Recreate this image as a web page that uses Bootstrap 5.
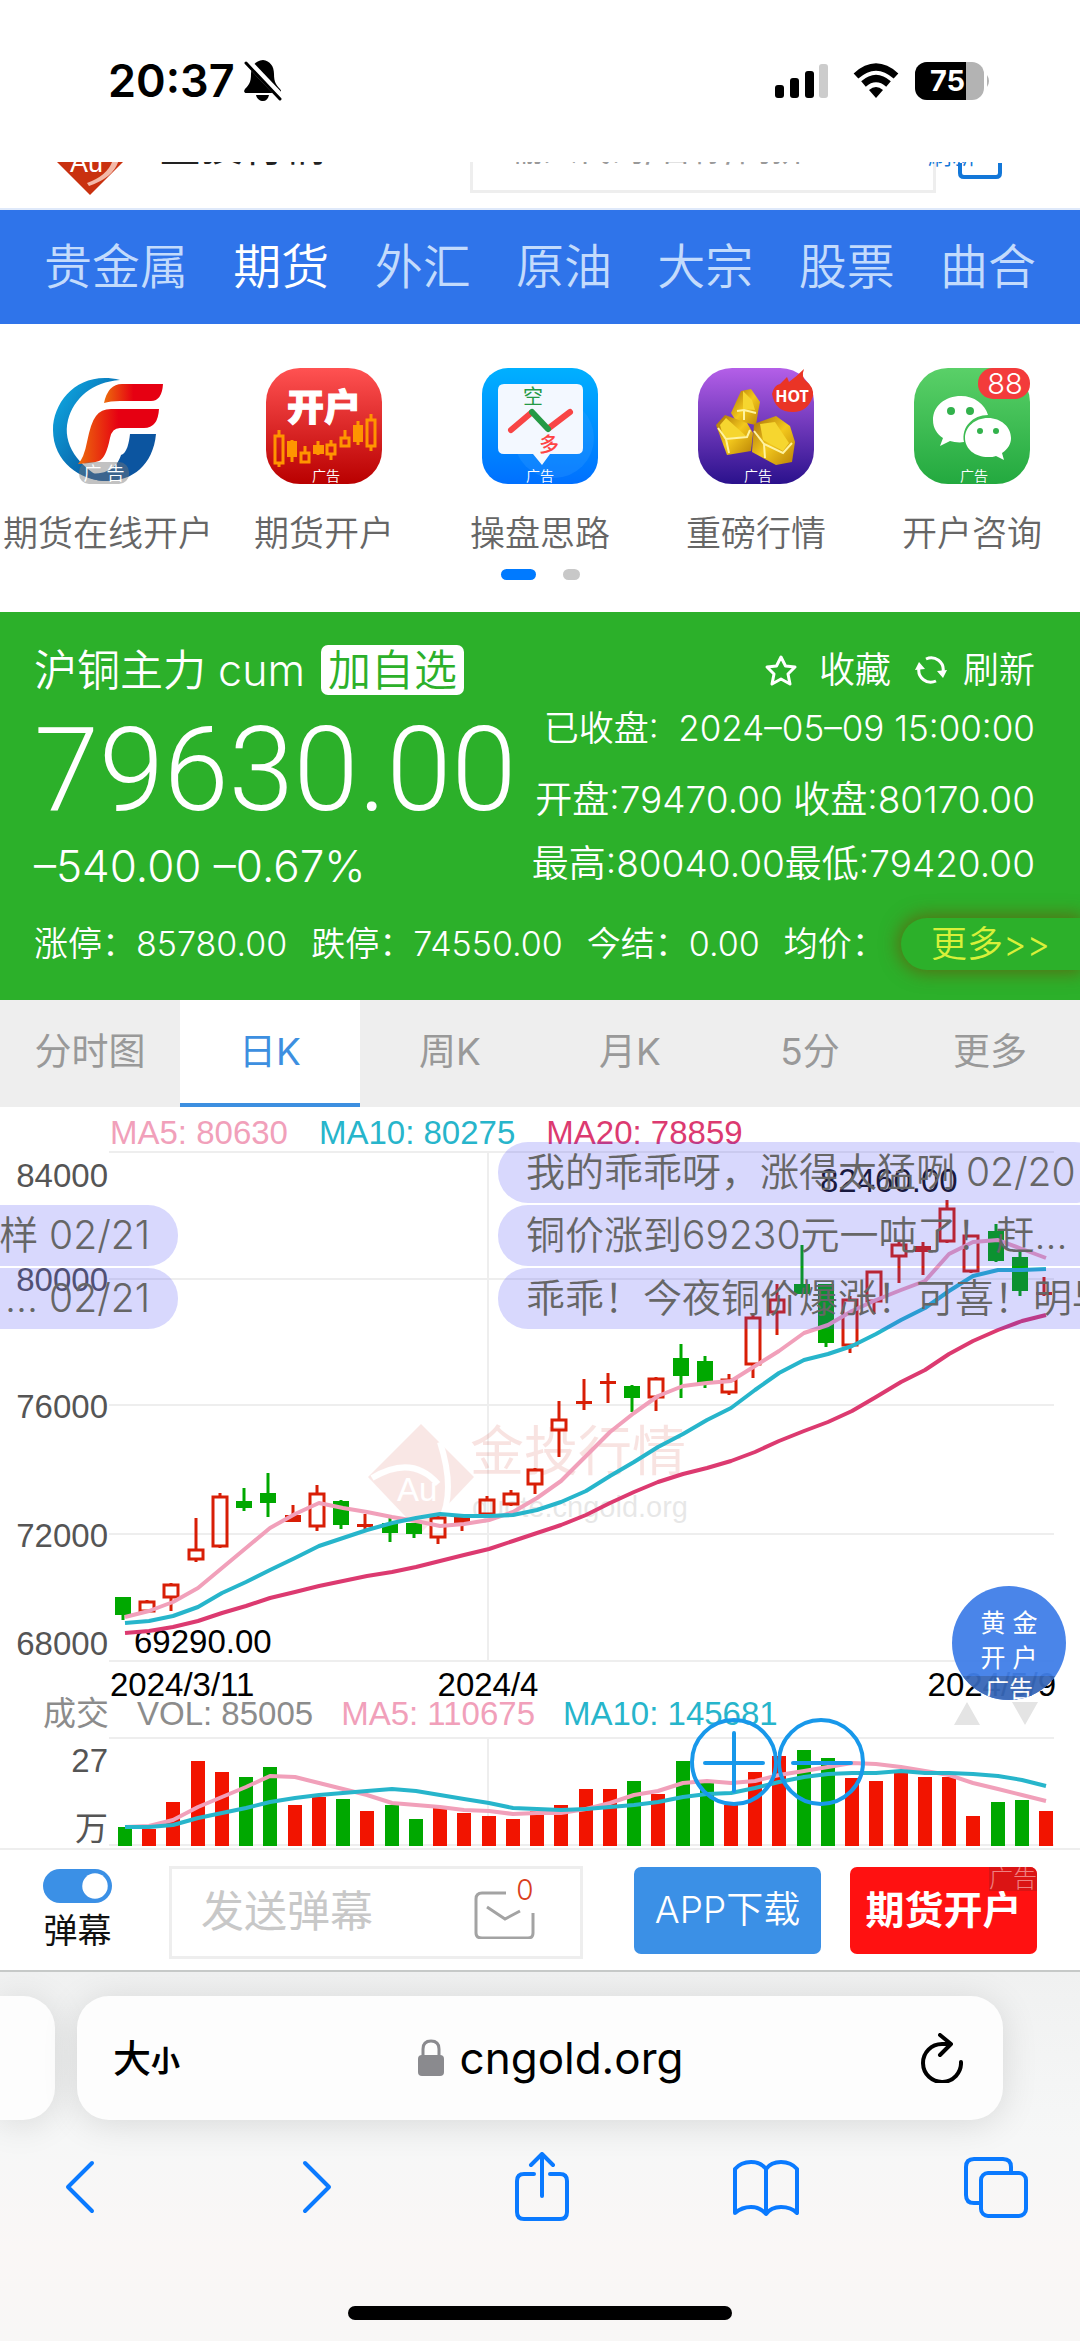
<!DOCTYPE html>
<html lang="zh-CN">
<head>
<meta charset="utf-8">
<meta name="viewport" content="width=device-width, initial-scale=1">
<title>沪铜主力 - 金投行情</title>
<link href="https://cdn.jsdelivr.net/npm/bootstrap@5.3.0/dist/css/bootstrap.min.css" rel="stylesheet">
<style>
body{font-family:Inter,"Noto Sans CJK SC",sans-serif;font-weight:350;background:#fff;color:#666;overflow-x:hidden}
svg{display:block;flex:none}
a{text-decoration:none;color:inherit}
button{font-weight:inherit}
.statusbar{height:162px;padding:0 89px 0 108px}
.clock{font-size:45px;font-weight:600;color:#000}
.batt{width:76px;height:40px}
.sitehead{height:48px;overflow:hidden;border-bottom:2px solid #dfe9fa;padding:0 78px 0 55px}
.logo{margin-bottom:13px}
.sitename{font-size:42px;line-height:48px;color:#222;font-weight:400;margin:0 auto 38px 34px}
.searchbox{width:466px;height:78px;border:3px solid #eee;border-radius:0;padding:0 36px 11px;font-size:34px;color:#999;background:#fff;margin-bottom:15px}
.searchbox::placeholder{color:#999;opacity:1}
.refreshlink{font-size:24px;line-height:32px;color:#1377d8;margin:0 0 36px -8px}
.headicon{margin:0 0 29px -18px}
.topnav{background:#2f74ea;padding:0 44px;height:114px;font-size:48px;color:#c3dbfc}
.topnav .active{color:#fff}
.entry{padding-top:44px;width:20%;font-size:35px;line-height:48px;white-space:nowrap}
.entry svg{margin-bottom:25px}
.dots{height:54px;padding-top:12px;gap:27px}
.dots span{height:11px;border-radius:6px;background:#c8c8c8;width:17px}
.dots .on{width:35px;background:#007aff}
.quote{background:#2cb02a;color:#fff;padding:28px 45px 0 34px;margin-top:1px;height:388px}
.qname{font-size:43px;line-height:60px}
.addbtn{font-size:43px;line-height:50px;background:#fff;color:#2cb02a;border:0;border-radius:7px;padding:0 7px;margin-left:16px}
.acts{font-size:36px;line-height:60px}
.price{font-family:Roboto,"Liberation Sans",sans-serif;font-size:117px;line-height:140px;font-weight:300}
.chg{font-size:44px;line-height:52px}
.q35{font-size:35px;line-height:56px}
.q37{font-size:37px;line-height:64px}
.q37a{padding-top:12px}
.strip{height:52px;margin-top:22px;margin-right:-45px}
.strip .q35{font-size:34px;line-height:52px}
.morebtn{background:#2cb02a;color:#d8f03a;border:0;border-radius:26px 0 0 26px;font-size:36px;line-height:52px;padding:0 30px;box-shadow:0 0 18px 3px rgba(120,60,0,.55)}
.ktabs{background:#eee;height:107px;font-size:37px;color:#999;font-weight:400}
.ktabs a{width:16.6667%;border-bottom:4px solid transparent}
.ktabs .active{background:#fff;color:#3d8fe0;border-color:#3d8fe0}
.legendrow{font-family:"Liberation Sans","Noto Sans CJK SC",sans-serif;font-size:33px;font-weight:400;gap:31px;padding-left:110px;line-height:40px;height:40px;padding-top:6px}
.legend2{height:32px;padding-left:43px;padding-top:0;line-height:32px;gap:28px}
.c5{color:#f1a0ba}.c10{color:#27b5cb}.c20{color:#dc3a70}.cv{color:#8c8c8c}
.charts text{font-family:"Liberation Sans","Noto Sans CJK SC",sans-serif;font-size:33px;font-weight:400}
.danmaku{position:absolute;font-size:39px;line-height:60px;height:61px;background:rgba(60,60,245,.2);border-radius:30px;color:#666;padding:0 28px;white-space:nowrap}
.dl{right:902px;border-radius:0 30px 30px 0}
.dr{left:498px}
.d1{top:35px}.d2{top:98px}.d3{top:161px}
.floatad{position:absolute;top:479px;left:952px;width:114px;height:114px;border-radius:57px;background:#417fe8;color:#fff;opacity:.95;border:0;overflow:hidden;font-size:25px;line-height:35px;padding:20px 0 0;font-weight:400}
.floatad small{background:#3767b8;font-size:24px;line-height:28px;height:34px}
.steppers{position:absolute;left:954px;top:595px}
.zoombtns{position:absolute;left:690px;top:611px}
.zoombtns button{border:0;background:none;padding:0}
.commentbar{border-top:2px solid #eee;height:124px;padding:16px 43px 0;border-bottom:2px solid #c6c9c8}
.swlabel{font-size:34px;line-height:48px;color:#111;font-weight:400;margin-top:4px}
.form-check-input.sw{width:69px;height:34px;margin:3px 0 0;border:0;background-color:#3b90e6}
.dmwrap{width:414px;margin-left:57px}
.dminput{height:93px;border:3px solid #eee;border-radius:0;font-size:43px;padding:0 29px 4px;color:#666}
.dminput::placeholder{color:#c8c8c8;opacity:1}
.mailicon{position:absolute;right:48px;top:13px}
.cta{width:187px;height:87px;border-radius:7px;font-size:37px;line-height:50px;color:#fff;border:0;padding:0 0 2px;margin-top:1px;white-space:nowrap}
.appbtn{background:#3b90e6;margin-left:51px}
.openbtn{background:#ff1111;margin-left:29px;font-weight:700;font-size:39px;position:relative;overflow:hidden}
.adtag{position:absolute;right:0;top:0;background:#db1414;color:#f08080;font-size:24px;line-height:24px;font-weight:300}
.safari{background:linear-gradient(#f0f1f1,#f6f7f7 45%,#faf7f6 75%,#f8f7f6);height:369px;color:#000;overflow:hidden}
.addr{background:#fdfdfd;border-radius:32px;height:124px;box-shadow:0 4px 36px rgba(0,0,0,.12)}
.prevtab{width:55px;border-radius:0 32px 32px 0}
.mainaddr{width:926px;margin-left:22px;padding:0 40px 0 36px;font-weight:400}
.tsize{font-size:38px;font-weight:500}
.tsize small{font-size:29px;font-weight:600}
.host{font-size:44px}
.tools{padding:32px 52px 0 65px}
.fwd{margin-left:42px}
.share{margin-left:18px}
.homebar{width:384px;height:14px;border-radius:7px;background:#000;margin:84px auto 0}
</style>
<script src="https://cdn.jsdelivr.net/npm/bootstrap@5.3.0/dist/js/bootstrap.bundle.min.js"></script>
</head>
<body>
<header class="statusbar d-flex align-items-center justify-content-between">
  <div class="d-flex align-items-center gap-2">
    <span class="clock">20:37</span>
    <svg width="40" height="42" viewBox="0 0 40 42"><path d="M20 0c-8 1-12 6-12 14 0 8-2 11-6 15-2 3 0 4 1 4h33c2 0 3-2 1-4-4-4-6-7-6-15 0-8-4-13-11-14z"/><path d="M13 35h13c-1 4-3 6-6 6s-6-2-7-6z"/><path d="M4 1l37 39" stroke="#fff" stroke-width="7"/><path d="M3 3l34 36" stroke="#000" stroke-width="3" stroke-linecap="round"/></svg>
  </div>
  <div class="d-flex align-items-center">
    <svg width="54" height="36" viewBox="0 0 54 36"><rect y="22" width="9" height="13" rx="3"/><rect x="15" y="15" width="9" height="20" rx="3"/><rect x="30" y="8" width="9" height="27" rx="3"/><rect x="44" y="1" width="9" height="34" rx="3" fill="#ccc"/></svg>
    <svg class="ms-4" width="46" height="36" viewBox="0 0 46 36"><g fill="none" stroke="#000" stroke-width="7"><path d="M3 13q20-18 40 0"/><path d="M10.500 21q12.500-11 25 0"/></g><path d="M23 35l-7-8q7-6 14 0z"/></svg>
    <svg class="batt ms-3" viewBox="0 0 76 40"><defs><clipPath id="bt"><rect width="69" height="38" y="1" rx="12"/></clipPath></defs><g clip-path="url(#bt)"><rect width="76" height="40" fill="#b3b3b3"/><rect width="51" height="40"/></g><path d="M72 14q4 6 0 12z" fill="#b3b3b3"/><text x="15" y="30" font-family="Inter" font-size="29" font-weight="700" fill="#fff">75</text></svg>
  </div>
</header>

<div class="sitehead d-flex align-items-end">
  <svg class="logo" width="70" height="70" viewBox="0 0 70 70"><path d="M35 0l35 35-35 35L0 35z" fill="#c9310f"/><path d="M64 34q-4 18-30 27l-2-3q22-8 26-24z" fill="#f3b9a8"/><text x="15" y="47" font-size="27" fill="#fff" font-family="Liberation Sans">Au</text></svg>
  <span class="sitename">金投行情</span>
  <input class="searchbox" type="text" placeholder="输入代码/名称/简拼" aria-label="搜索代码">
  <a href="#" class="refreshlink">刷新</a>
  <svg class="headicon" width="44" height="60" viewBox="0 0 44 60"><path d="M2 44v10q0 4 4 4h32q4 0 4-4V44" fill="none" stroke="#1377d8" stroke-width="4"/></svg>
</div>

<nav class="topnav d-flex align-items-center justify-content-between" aria-label="频道">
  <a href="#">贵金属</a><a href="#" class="active">期货</a><a href="#">外汇</a><a href="#">原油</a><a href="#">大宗</a><a href="#">股票</a><a href="#">曲合</a>
</nav>

<section class="d-flex">
  <a href="#" class="entry d-flex flex-column align-items-center">
    <svg width="116" height="116" viewBox="0 0 116 116"><defs><linearGradient id="fb" x1="0" y1="0" x2="1" y2="1"><stop offset="0" stop-color="#0fb0e8"/><stop offset="1" stop-color="#06408c"/></linearGradient><linearGradient id="fr"><stop stop-color="#ec6c0c"/><stop offset=".5" stop-color="#e60012"/></linearGradient></defs><path d="M70 12C30 2 3 32 3 62c0 32 28 51 53 51C28 98 12 76 18 52 24 30 42 14 70 12z" fill="url(#fb)"/><path d="M80 66h26c-3 32-25 48-51 47-9 0-17-3-22-8 26 3 34-6 38-18 6-2 8-12 9-21z" fill="#0c55a0"/><path d="M54 35q4-19 18-19h41q-1 17-12 17H70q-10 0-16 2z" fill="url(#fr)"/><path d="M28 96q6-6 9-22 4-20 9-26 5-7 15-7h48q-1 19-15 19H70q-8 0-10 10-4 20-11 23-6 2-21 3z" fill="url(#fr)"/><rect x="29" y="94" width="50" height="22" rx="10" fill="#777" opacity=".45"/><text x="54" y="112" text-anchor="middle" font-size="18" fill="#fff">广 告</text></svg>
    期货在线开户</a>
  <a href="#" class="entry d-flex flex-column align-items-center">
    <svg width="116" height="116" viewBox="0 0 116 116"><defs><linearGradient id="g1" x1="0" y1="0" x2="0" y2="1"><stop stop-color="#ff5252"/><stop offset="1" stop-color="#b90000"/></linearGradient></defs><rect width="116" height="116" rx="34" fill="url(#g1)"/><text x="58" y="53" text-anchor="middle" font-size="37" font-weight="900" fill="#fff" stroke="#fff" stroke-width="1">开户</text><g fill="none" stroke="#ff9500" stroke-width="3"><path d="M13 62v6M13 94v5M26 72v22M39 78v8M52 73v14M65 72v4M65 87v5M79 62v8M92 53v24M105 46v6M105 77v6"/><rect x="9" y="68" width="8" height="27"/><rect x="35" y="85" width="8" height="9"/><rect x="61" y="77" width="8" height="9"/><rect x="75" y="70" width="8" height="8"/><rect x="101" y="52" width="8" height="26"/></g><path d="M21 73h10v16H21zM47 77h11v9H47zM87 57h10v17H87z" fill="#ff9500"/><text x="60" y="113" text-anchor="middle" font-size="14" fill="#fff">广告</text></svg>
    期货开户</a>
  <a href="#" class="entry d-flex flex-column align-items-center">
    <svg width="116" height="116" viewBox="0 0 116 116"><defs><linearGradient id="g2" x1="0" y1="0" x2="0" y2="1"><stop stop-color="#00b0ff"/><stop offset="1" stop-color="#0070ff"/></linearGradient></defs><rect width="116" height="116" rx="26" fill="url(#g2)"/><circle cx="72" cy="70" r="40" fill="#3ca2ff" opacity=".25"/><path d="M22 16h73q6 0 6 6v58q0 6-6 6H68l-8 11-9-11H22q-6 0-6-6V22q0-6 6-6z" fill="#f3f8ff"/><text x="51" y="36" text-anchor="middle" font-size="20" font-weight="400" fill="#249a45">空</text><text x="67" y="84" text-anchor="middle" font-size="20" fill="#f44" font-weight="500">多</text><g fill="none" stroke-width="6" stroke-linecap="round"><path d="M29 62l20-17M67 60l21-16" stroke="#f84545"/><path d="M50 44l16 17" stroke="#249a45"/></g><text x="58" y="113" text-anchor="middle" font-size="14" fill="#fff">广告</text></svg>
    操盘思路</a>
  <a href="#" class="entry d-flex flex-column align-items-center">
    <svg width="116" height="116" viewBox="0 0 116 116"><defs><linearGradient id="g3" x1="0" y1="0" x2="0" y2="1"><stop stop-color="#b45fe8"/><stop offset="1" stop-color="#2a118c"/></linearGradient><linearGradient id="gd" x1="0" y1="0" x2="1" y2="1"><stop stop-color="#a56c06"/><stop offset=".5" stop-color="#f3c81c"/><stop offset="1" stop-color="#b98206"/></linearGradient></defs><rect width="116" height="116" rx="34" fill="url(#g3)"/><path d="M43 23l10-2 9 13-2 10-2 13-20-4-5-8z" fill="url(#gd)"/><path d="M27 47l22 8 6 10-2 18-24 4-11-30z" fill="url(#gd)"/><path d="M56 56l22-8 14 10 5 16-3 20-16 3-24-13z" fill="url(#gd)"/><path d="M28 50l20 18-22 3-4-14zM62 56l15-2 14 21-6 8-20-11zM45 23l9 9 3 10-12-1z" fill="#f6d62f"/><path d="M20 60l8 11 21-2 3-7M28 71l3 14M56 63l10 13 19 9 9-10M66 76l1 14M39 43l7-1 12 3M46 42v10" stroke="#fff3a0" stroke-width="2" fill="none"/><path d="M74 26q2-9 8-10l7-7 2 5q8-6 15-13-3 8 2 12 8 6 7 15-5 16-20 16-18 0-21-18z" fill="#ea3426"/><text x="94" y="34" text-anchor="middle" font-size="16" font-family="Noto Sans" font-weight="700" fill="#fff">HOT</text><text x="60" y="113" text-anchor="middle" font-size="14" fill="#fff">广告</text></svg>
    重磅行情</a>
  <a href="#" class="entry d-flex flex-column align-items-center">
    <svg width="116" height="116" viewBox="0 0 116 116"><defs><linearGradient id="g4" x1="0" y1="0" x2="0" y2="1"><stop stop-color="#5ad068"/><stop offset="1" stop-color="#23a93f"/></linearGradient></defs><rect width="116" height="116" rx="34" fill="url(#g4)"/><path d="M47 28c-16 0-28 10-28 24 0 8 4 14 10 18l-3 8 10-5c4 1 9 2 14 1-3-15 9-27 24-27-3-11-14-19-27-19z" fill="#fff"/><path d="M74 50c-13 0-23 9-23 20s10 19 23 19c3 0 6 0 8-1l8 4-2-7c6-4 9-9 9-15 0-11-10-20-23-20z" fill="#fff"/><g fill="#32b24c"><circle cx="37" cy="43" r="4"/><circle cx="56" cy="43" r="4"/><circle cx="66" cy="63" r="3"/><circle cx="82" cy="63" r="3"/></g><rect x="64" y="0" width="52" height="31" rx="15" fill="#f33b3b"/><text x="91" y="26" text-anchor="middle" font-size="29" font-family="Inter" font-weight="350" fill="#fff">88</text><text x="60" y="113" text-anchor="middle" font-size="14" fill="#fff">广告</text></svg>
    开户咨询</a>
</section>
<div class="dots d-flex justify-content-center"><span class="on"></span><span></span></div>

<section class="quote">
  <div class="d-flex justify-content-between">
    <div class="qname d-flex align-items-center"><span>沪铜主力 cum</span><button class="addbtn">加自选</button></div>
    <div class="acts d-flex align-items-center">
      <svg width="36" height="34" viewBox="0 0 36 34"><path d="M18 4l4.500 9 9.500 1-7 7 2 10-9-5-9 5 2-10-7-7 9.500-1z" fill="none" stroke="#fff" stroke-width="3" stroke-linejoin="round"/></svg><a href="#" class="ms-3 ps-1">收藏</a>
      <svg class="ms-4 me-3" width="32" height="30" viewBox="0 0 32 30"><g fill="none" stroke="#fff" stroke-width="3"><path d="M21 26A12 12 0 0 1 4 13M11 4A12 12 0 0 1 28 17"/></g><path d="M0 15l4-8 6 7zM32 15l-4 8-6-7z" fill="#fff"/></svg><a href="#">刷新</a>
    </div>
  </div>
  <div class="d-flex justify-content-between">
    <div><div class="price">79630.00</div><div class="chg">–540.00 –0.67%</div></div>
    <div class="text-end text-nowrap"><div class="q35">已收盘:&nbsp; 2024–05–09 15:00:00</div><div class="q37 q37a">开盘:79470.00 收盘:80170.00</div><div class="q37">最高:80040.00最低:79420.00</div></div>
  </div>
  <div class="strip d-flex justify-content-between text-nowrap">
    <div class="q35 d-flex gap-4"><span>涨停：85780.00</span><span>跌停：74550.00</span><span>今结：0.00</span><span>均价：</span></div>
    <button class="morebtn">更多&gt;&gt;</button>
  </div>
</section>

<nav class="ktabs d-flex text-center" aria-label="周期">
  <a href="#" class="d-flex align-items-center justify-content-center">分时图</a><a href="#" class="active d-flex align-items-center justify-content-center">日K</a><a href="#" class="d-flex align-items-center justify-content-center">周K</a><a href="#" class="d-flex align-items-center justify-content-center">月K</a><a href="#" class="d-flex align-items-center justify-content-center">5分</a><a href="#" class="d-flex align-items-center justify-content-center">更多</a>
</nav>

<section class="charts position-relative overflow-hidden">
  <div class="legendrow d-flex"><span class="c5">MA5: 80630</span><span class="c10">MA10: 80275</span><span class="c20">MA20: 78859</span></div>
  <svg id="price" width="100%" viewBox="0 0 1080 551">
    <path d="M109 5H1054M109 132H1054M109 258H1054M109 387H1054M109 514H1054M488 5V514" stroke="#eee" stroke-width="2" fill="none"/>
    <g opacity=".11"><path d="M421 277l53 53-53 56-53-56z" fill="#d03020"/><path d="M440 295q16 50 0 80M372 331q40-24 66 6" stroke="#fff" stroke-width="6" fill="none"/><text x="397" y="354" font-size="30" fill="#fff">Au</text></g>
    <text x="470" y="324" style="font-size:54px" fill="#d03020" opacity=".13">金投行情</text>
    <text x="688" y="370" text-anchor="end" style="font-size:29px" fill="#000" opacity=".09">quote.cngold.org</text>
    <g text-anchor="end" fill="#555"><text x="108" y="40">84000</text><text x="108" y="144">80000</text><text x="108" y="271">76000</text><text x="108" y="400">72000</text><text x="108" y="508">68000</text></g>
    <g fill="#000"><text x="134" y="506">69290.00</text><text x="820" y="45" fill="#111">82460.00</text><text x="110" y="549">2024/3/11</text><text x="488" y="549" text-anchor="middle">2024/4</text><text x="1056" y="549" text-anchor="end">2024/5/9</text></g>
  </svg>
  <div class="legendrow legend2 d-flex"><span class="cv">成交</span><span class="cv">VOL: 85005</span><span class="c5">MA5: 110675</span><span class="c10">MA10: 145681</span></div>
  <svg id="volume" width="100%" viewBox="0 0 1080 118">
    <path d="M109 8H1054M109 115H1054M488 8V115" stroke="#eee" stroke-width="2" fill="none"/>
    <g text-anchor="end" fill="#555"><text x="108" y="42">27</text><text x="108" y="110">万</text></g>
  </svg>
  <div class="danmaku dr d1">我的乖乖呀，涨得太猛咧 02/20</div>
  <div class="danmaku dr d2">铜价涨到69230元一吨了！赶... 02/20</div>
  <div class="danmaku dr d3">乖乖！今夜铜价爆涨！可喜！明早</div>
  <div class="danmaku dl d2">样 02/21</div>
  <div class="danmaku dl d3">... 02/21</div>
  <svg class="steppers" width="84" height="24" viewBox="0 0 84 24" aria-hidden="true"><path d="M13 0l13 23H0zM58 0h26L71 23z" fill="#e4e4e4"/></svg>
  <button class="floatad d-flex flex-column text-center"><span class="w-100">黄 金</span><span class="w-100">开 户</span><small class="w-100">广告</small></button>
  <div class="zoombtns d-flex">
    <button aria-label="放大"><svg width="88" height="88" viewBox="0 0 88 88" fill="none" stroke="#1898ea" stroke-width="4"><circle cx="44" cy="44" r="42"/><path d="M15 45h58M44 15v58" stroke-linecap="round"/></svg></button><button aria-label="缩小"><svg width="88" height="88" viewBox="0 0 88 88" fill="none" stroke="#1898ea" stroke-width="4"><circle cx="43" cy="44" r="42"/><path d="M15 45h58" stroke-linecap="round"/></svg></button>
  </div>
</section>

<section class="commentbar d-flex align-items-start">
  <div class="form-switch p-0 d-flex flex-column align-items-center"><input class="form-check-input sw" type="checkbox" role="switch" id="dm" checked><label class="swlabel" for="dm">弹幕</label></div>
  <div class="dmwrap position-relative">
    <input class="form-control dminput" type="text" placeholder="发送弹幕" aria-label="发送弹幕">
    <svg class="mailicon" width="62" height="60" viewBox="0 0 62 60"><g fill="none" stroke="#a3a3a3" stroke-width="3"><path d="M33 14H9q-6 0-6 6v34q0 5 6 5h46q5 0 5-5V34"/><path d="M14 28l18 12 15-8"/></g><text x="52" y="21" text-anchor="middle" font-size="28" font-family="Inter" fill="#d9401c">0</text></svg>
  </div>
  <button class="cta appbtn">APP下载</button>
  <button class="cta openbtn">期货开户<span class="adtag">广告</span></button>
</section>

<footer class="safari">
  <div class="d-flex pt-4">
    <div class="addr prevtab"></div>
    <div class="addr mainaddr d-flex align-items-center justify-content-between">
      <span class="tsize">大<small>小</small></span>
      <span class="host d-flex align-items-center"><svg class="me-3" width="26" height="38" viewBox="0 0 26 38"><path d="M5 18v-8q0-8 8-8t8 8v8" fill="none" stroke="#8a8a8e" stroke-width="3"/><rect y="16" width="26" height="21" rx="4" fill="#8a8a8e"/></svg>cngold.org</span>
      <svg width="42" height="50" viewBox="0 0 42 50" fill="none" stroke="#000" stroke-width="4" stroke-linecap="round" stroke-linejoin="round"><path d="M40 29A19 19 0 1 1 21 11h8M19 2l11 9-11 11"/></svg>
    </div>
  </div>
  <div class="tools d-flex justify-content-between align-items-center">
    <svg width="30" height="70" viewBox="0 0 30 70" fill="none" stroke="#0a7aff" stroke-width="4" stroke-linecap="round" stroke-linejoin="round"><path d="M27 11L3 35l24 24"/></svg>
    <svg class="fwd" width="30" height="70" viewBox="0 0 30 70" fill="none" stroke="#0a7aff" stroke-width="4" stroke-linecap="round" stroke-linejoin="round"><path d="M3 11l24 24L3 59"/></svg>
    <svg class="share" width="54" height="70" viewBox="0 0 54 70" fill="none" stroke="#0a7aff" stroke-width="4" stroke-linecap="round" stroke-linejoin="round"><path d="M19 22H9q-7 0-7 7v31q0 7 7 7h36q7 0 7-7V29q0-7-7-7H35M27 44V3M16 13L27 2l11 11"/></svg>
    <svg width="66" height="70" viewBox="0 0 66 70" fill="none" stroke="#0a7aff" stroke-width="4" stroke-linejoin="round"><path d="M33 17Q28 10 18 10T2 17v44q7-6 16-6t15 7q5-7 15-7t16 6V17q-6-7-16-7T33 17zM33 17v45"/></svg>
    <svg width="64" height="70" viewBox="0 0 64 70" fill="none" stroke="#0a7aff" stroke-width="4"><rect x="17" y="21" width="45" height="43" rx="7"/><path d="M17 51h-7q-8 0-8-8V15q0-8 8-8h29q8 0 8 8v6"/></svg>
  </div>
  <div class="homebar"></div>
</footer>

<script>
const NS = 'http://www.w3.org/2000/svg';
const X = i => Math.round(125 + 24.24 * i);
function add(svg, tag, attrs) {
  const el = document.createElementNS(NS, tag);
  for (const k in attrs) el.setAttribute(k, attrs[k]);
  svg.appendChild(el);
}
// Each candle: body top, body bottom, wick top, wick bottom.
const candles = [[451,467,451,473],[455,464,453,464],[438,450,436,464],[403,412,371,415],[350,399,346,401],[355,360,341,364],[347,355,326,370],[369,374,358,375],[347,379,338,384],[355,377,353,382],[378,378,367,383],[377,385,369,395],[377,386,377,391],[371,390,366,397],[371,375,367,384],[353,367,349,367],[347,357,343,359],[323,337,321,347],[273,283,254,310],[255,255,232,263],[235,235,226,256],[240,250,238,265],[232,250,230,264],[212,228,197,251],[215,235,209,241],[233,245,227,248],[171,217,166,231],[153,165,137,188],[138,146,98,146],[138,195,138,200],[153,198,149,206],[125,154,125,167],[98,109,95,136],[100,104,95,128],[62,94,53,96],[89,124,89,126],[85,113,77,115],[111,143,104,149],[146,147,130,149]];
const falling = [0,5,6,9,11,12,21,23,24,28,29,36,37];
const price = document.getElementById('price');
candles.forEach(([t, b, hi, lo], i) => {
  const down = falling.includes(i), c = down ? '#00a800' : '#d81e06', x = X(i) - 2, h = b - t;
  if (down || h < 6) {
    add(price, 'rect', {x: x - 8, y: t - 1, width: 16, height: Math.max(h, 1) + 2, fill: c});
    add(price, 'path', {d: `M${x} ${hi}V${lo}`, stroke: c, 'stroke-width': 3});
  } else {
    add(price, 'rect', {x: x - 7, y: t, width: 14, height: h, fill: 'none', stroke: c, 'stroke-width': 3});
    add(price, 'path', {d: `M${x} ${hi}V${t}M${x} ${b}V${lo}`, stroke: c, 'stroke-width': 3});
  }
});
function line(svg, ys, c) {
  add(svg, 'polyline', {points: ys.map((y, i) => X(i) + ',' + y).join(' '), fill: 'none', stroke: c, 'stroke-width': 4, 'stroke-linejoin': 'round'});
}
line(price, [470,464,455,441,421,401,381,367,356,361,365,370,374,379,377,373,365,351,334,309,285,266,249,239,236,234,219,204,186,178,164,153,143,134,107,95,93,102,111], '#f1a0ba');
line(price, [476,474,469,460,446,435,423,411,399,391,383,376,371,367,369,369,368,363,355,344,329,315,300,287,273,261,243,226,213,207,199,187,173,161,144,129,123,123,122], '#27b5cb');
line(price, [486,484,480,474,466,459,451,445,439,434,429,425,420,414,408,402,394,386,378,368,356,345,335,327,321,314,305,294,284,275,264,250,235,223,207,194,183,174,168], '#dc3a70');
const volume = document.getElementById('volume');
[97,99,72,31,42,47,37,75,67,69,81,75,89,76,83,86,89,81,75,59,59,51,64,31,52,75,42,26,20,28,48,51,42,47,47,86,72,70,81].forEach((y, i) =>
  add(volume, 'rect', {x: X(i) - 7, y, width: 14, height: 116 - y, fill: falling.includes(i) ? '#00a800' : '#f21400'}));
line(volume, [97,96,90,77,67,57,46,47,53,59,65,73,75,77,80,81,84,83,83,79,73,65,61,53,51,53,51,45,41,37,33,34,37,41,45,53,59,65,71], '#f1a0ba');
line(volume, [97,97,95,88,83,78,72,68,65,63,61,59,61,65,69,73,78,79,80,79,77,75,72,67,64,63,58,52,47,44,43,43,41,43,43,44,46,50,56], '#27b5cb');
</script>
</body>
</html>
